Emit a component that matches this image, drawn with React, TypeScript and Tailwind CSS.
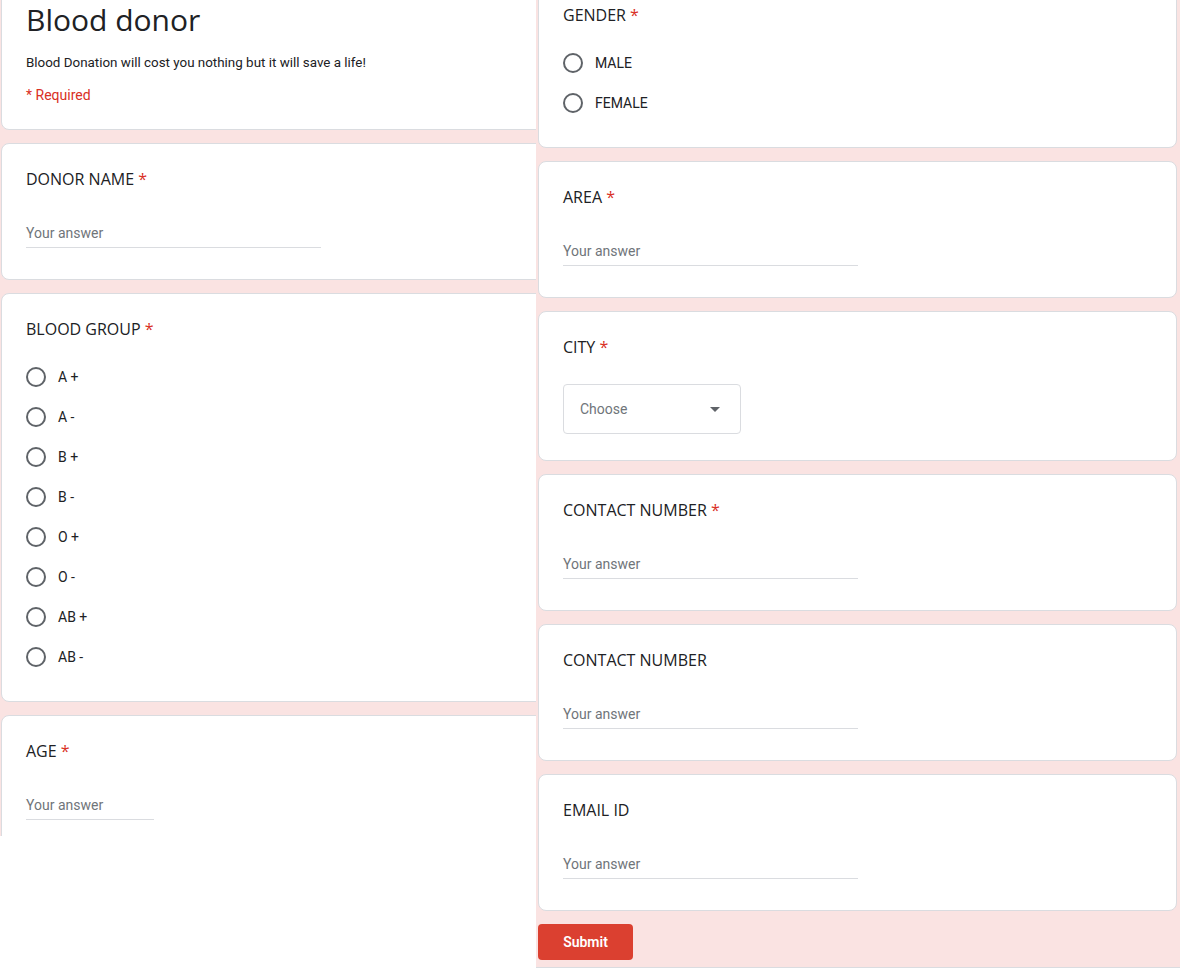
import * as React from 'react';

const heading = { fontFamily: '"Open Sans", "Liberation Sans", sans-serif' };
const body = { fontFamily: 'Roboto, "Liberation Sans", sans-serif' };

function Label({ text, required }: { text: string; required?: boolean }) {
  return (
    <div className="h-6 text-base leading-6 text-[#202124]" style={heading}>
      {text}
      {required && <span className="text-[#d93025]"> *</span>}
    </div>
  );
}

function TextCard({ label, required, width = 'w-[295px]' }: { label: string; required?: boolean; width?: string }) {
  return (
    <div className="rounded-lg border border-[#dadce0] bg-white px-6 pt-[23px] pb-[31px]">
      <Label text={label} required={required} />
      <div className={`mt-8 h-[25px] border-b border-[#dadce0] pb-1 text-sm leading-5 text-[#70757a] ${width}`} style={body}>
        Your answer
      </div>
    </div>
  );
}

function RadioCard({ label, options }: { label: string; options: string[] }) {
  return (
    <div className="rounded-lg border border-[#dadce0] bg-white px-6 pt-[23px] pb-6">
      <Label text={label} required />
      <div className="mt-4 flex flex-col">
        {options.map((opt) => (
          <div key={opt} className="flex h-10 items-center gap-3">
            <div className="h-5 w-5 rounded-full border-2 border-[#5f6368]" />
            <span className="text-sm text-[#202124]" style={body}>{opt}</span>
          </div>
        ))}
      </div>
    </div>
  );
}

export default function App() {
  return (
    <div className="flex w-[1180px] items-start bg-white">
      {/* left column */}
      <div className="h-[836px] w-[536px] overflow-hidden bg-[#fae3e2] pl-px">
        <div className="flex w-[560px] flex-col gap-[13px]">
          <div className="-mt-6 rounded-lg border border-[#dadce0] bg-white px-6 pt-[23px] pb-6">
            <div className="h-10 text-[30px] leading-10 text-[#202124]" style={heading}>Blood donor</div>
            <div className="mt-[13px] text-[13.4px] leading-5 text-[#202124]" style={body}>
              Blood Donation will cost you nothing but it will save a life!
            </div>
            <div className="mt-3 text-sm leading-5 text-[#d93025]" style={body}>* Required</div>
          </div>
          <TextCard label="DONOR NAME" required />
          <RadioCard label="BLOOD GROUP" options={['A +', 'A -', 'B +', 'B -', 'O +', 'O -', 'AB +', 'AB -']} />
          <TextCard label="AGE" required width="w-[128px]" />
        </div>
      </div>

      {/* right column */}
      <div className="w-[644px] overflow-hidden border-b border-[#dadce0] bg-[#fae3e2] pr-[3px] pb-[7px] pl-[2px]">
        <div className="flex flex-col gap-[13px]">
          <div className="-mt-[21px]">
            <RadioCard label="GENDER" options={['MALE', 'FEMALE']} />
          </div>
          <TextCard label="AREA" required />
          <div className="rounded-lg border border-[#dadce0] bg-white px-6 pt-[23px] pb-[26px]">
            <Label text="CITY" required />
            <div className="mt-[25px] flex h-[50px] w-[178px] items-center justify-between rounded border border-[#dadce0] pr-5 pl-4">
              <span className="text-sm text-[#70757a]" style={body}>Choose</span>
              <svg width="10" height="5" viewBox="0 0 10 5">
                <path d="M0 0 L10 0 L5 5 Z" fill="#5f6368" />
              </svg>
            </div>
          </div>
          <TextCard label="CONTACT NUMBER" required />
          <TextCard label="CONTACT NUMBER" />
          <TextCard label="EMAIL ID" />
          <button className="h-9 w-[95px] rounded bg-[#db4030] text-sm font-semibold text-white" style={body}>
            Submit
          </button>
        </div>
      </div>
    </div>
  );
}
